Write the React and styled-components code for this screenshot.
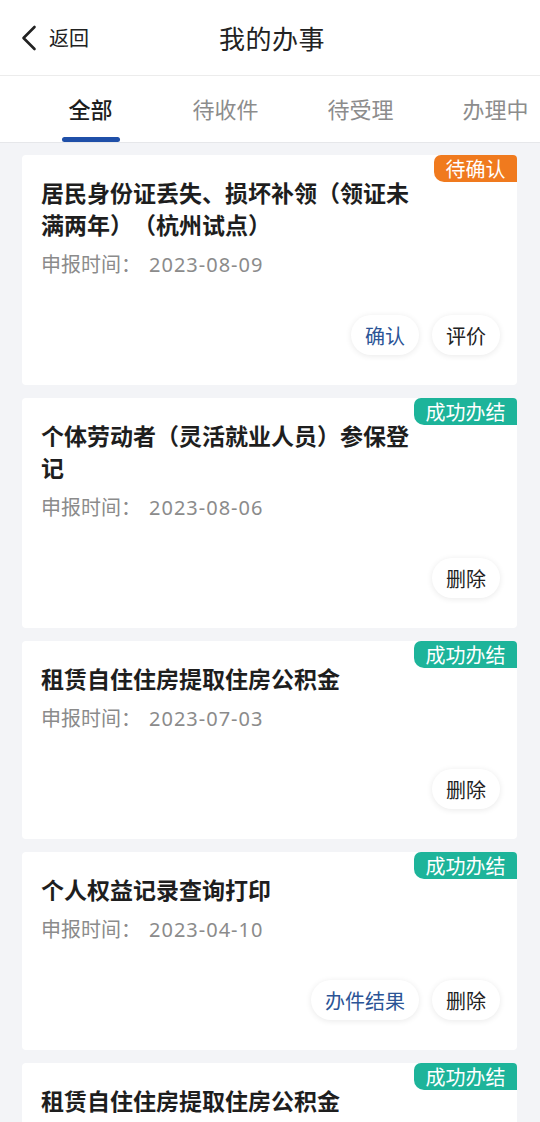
import React, { useState } from "react";
import styled, { createGlobalStyle } from "styled-components";

const items = [
  {
    title: "居民身份证丢失、损坏补领（领证未满两年）（杭州试点）",
    date: "2023-08-09",
    status: "待确认",
    tone: "orange",
    actions: [
      { label: "确认", primary: true },
      { label: "评价" },
    ],
  },
  {
    title: "个体劳动者（灵活就业人员）参保登记",
    date: "2023-08-06",
    status: "成功办结",
    tone: "green",
    actions: [{ label: "删除" }],
  },
  {
    title: "租赁自住住房提取住房公积金",
    date: "2023-07-03",
    status: "成功办结",
    tone: "green",
    actions: [{ label: "删除" }],
  },
  {
    title: "个人权益记录查询打印",
    date: "2023-04-10",
    status: "成功办结",
    tone: "green",
    actions: [{ label: "办件结果", primary: true }, { label: "删除" }],
  },
  {
    title: "租赁自住住房提取住房公积金",
    date: "2023-03-15",
    status: "成功办结",
    tone: "green",
    actions: [{ label: "删除" }],
  },
];

const tabs = ["全部", "待收件", "待受理", "办理中"];

/* List of submitted affairs with status filter tabs */
const App = () => {
  const [active, setActive] = useState(0);

  return (
    <>
      <GlobalStyle />
      <Page>
        <Header>
          <BackButton>
            <svg width="18" height="28" viewBox="0 0 18 28">
              <path
                d="M14.5 3 L3.5 14 L14.5 25"
                fill="none"
                stroke="#222"
                strokeWidth="2.6"
                strokeLinecap="round"
                strokeLinejoin="round"
              />
            </svg>
            <span>返回</span>
          </BackButton>
          <Title>我的办事</Title>
        </Header>

        <TabBar>
          {tabs.map((t, i) => (
            <Tab key={t} $active={i === active} onClick={() => setActive(i)}>
              {t}
            </Tab>
          ))}
        </TabBar>

        <List>
          {items.map((item, i) => (
            <Card key={i}>
              <Badge $tone={item.tone}>{item.status}</Badge>
              <CardTitle>{item.title}</CardTitle>
              <DateRow>
                申报时间：<DateValue>{item.date}</DateValue>
              </DateRow>
              <Actions>
                {item.actions.map((a) => (
                  <ActionButton key={a.label} $primary={a.primary}>
                    {a.label}
                  </ActionButton>
                ))}
              </Actions>
            </Card>
          ))}
        </List>
      </Page>
    </>
  );
};

export default App;

// #region Stylings
const GlobalStyle = createGlobalStyle`
  html, body {
    margin: 0;
    padding: 0;
    background: #f3f4f7;
  }
  body {
    font-family: "Noto Sans CJK SC", "Noto Sans", sans-serif;
    color: #222;
  }
`;

const Page = styled.div`
  width: 540px;
  height: 1122px;
  overflow: hidden;
  background: #f3f4f7;
`;

const Header = styled.div`
  position: relative;
  height: 75px;
  background: #fff;
  display: flex;
  align-items: center;
  justify-content: center;
  border-bottom: 1px solid #ececec;
`;

const BackButton = styled.div`
  position: absolute;
  left: 20px;
  top: 0;
  bottom: 0;
  display: flex;
  align-items: center;
  gap: 11px;
  font-size: 20px;
  color: #222;

  svg {
    margin-top: 1px;
  }
`;

const Title = styled.h1`
  margin: 0 0 0 4px;
  font-size: 26px;
  font-weight: 400;
  color: #222;
  letter-spacing: 0.5px;
`;

const TabBar = styled.div`
  height: 66px;
  background: #fff;
  display: flex;
  align-items: stretch;
  padding-left: 23px;
  white-space: nowrap;
  overflow: hidden;
  border-bottom: 1px solid #e6e7ea;
`;

const Tab = styled.div`
  position: relative;
  flex: 0 0 135px;
  display: flex;
  align-items: center;
  justify-content: center;
  padding-bottom: 2px;
  font-size: 22px;
  font-weight: ${(p) => (p.$active ? 500 : 400)};
  color: ${(p) => (p.$active ? "#1d1d1d" : "#8c8c8c")};
  cursor: pointer;

  &::after {
    content: "";
    display: ${(p) => (p.$active ? "block" : "none")};
    position: absolute;
    left: 50%;
    bottom: 0;
    transform: translateX(-50%);
    width: 58px;
    height: 5px;
    border-radius: 3px;
    background: #1f4fa8;
  }
`;

const List = styled.div`
  display: flex;
  flex-direction: column;
  gap: 13px;
  padding: 12px 23px 12px 22px;
`;

const Card = styled.div`
  position: relative;
  background: #fff;
  border-radius: 4px;
  padding: 21px 17px 30px 19px;
`;

const Badge = styled.div`
  position: absolute;
  top: 0;
  right: 0;
  height: 27px;
  padding: 0 11.5px;
  display: flex;
  align-items: center;
  font-size: 20px;
  color: #fff;
  border-radius: 7px 4px 0 10px;
  background: ${(p) => (p.$tone === "orange" ? "#f07a1e" : "#1db49a")};
`;

const CardTitle = styled.div`
  max-width: 376px;
  font-size: 23px;
  line-height: 32px;
  font-weight: 700;
  color: #1e1e1e;
  text-spacing-trim: space-all;
`;

const DateRow = styled.div`
  margin-top: 11px;
  font-size: 20px;
  line-height: 26px;
  color: #8b8b8b;
`;

const DateValue = styled.span`
  margin-left: 8px;
  letter-spacing: 1px;
  font-family: "Noto Sans", "Noto Sans CJK SC", sans-serif;
`;

const Actions = styled.div`
  margin-top: 37px;
  display: flex;
  justify-content: flex-end;
  gap: 13px;
`;

const ActionButton = styled.div`
  height: 40px;
  padding: 0 14px;
  display: flex;
  align-items: center;
  border-radius: 20px;
  background: #fff;
  box-shadow: 0 1px 6px rgba(0, 0, 0, 0.09);
  font-size: 20px;
  color: ${(p) => (p.$primary ? "#2b5496" : "#222")};
`;
